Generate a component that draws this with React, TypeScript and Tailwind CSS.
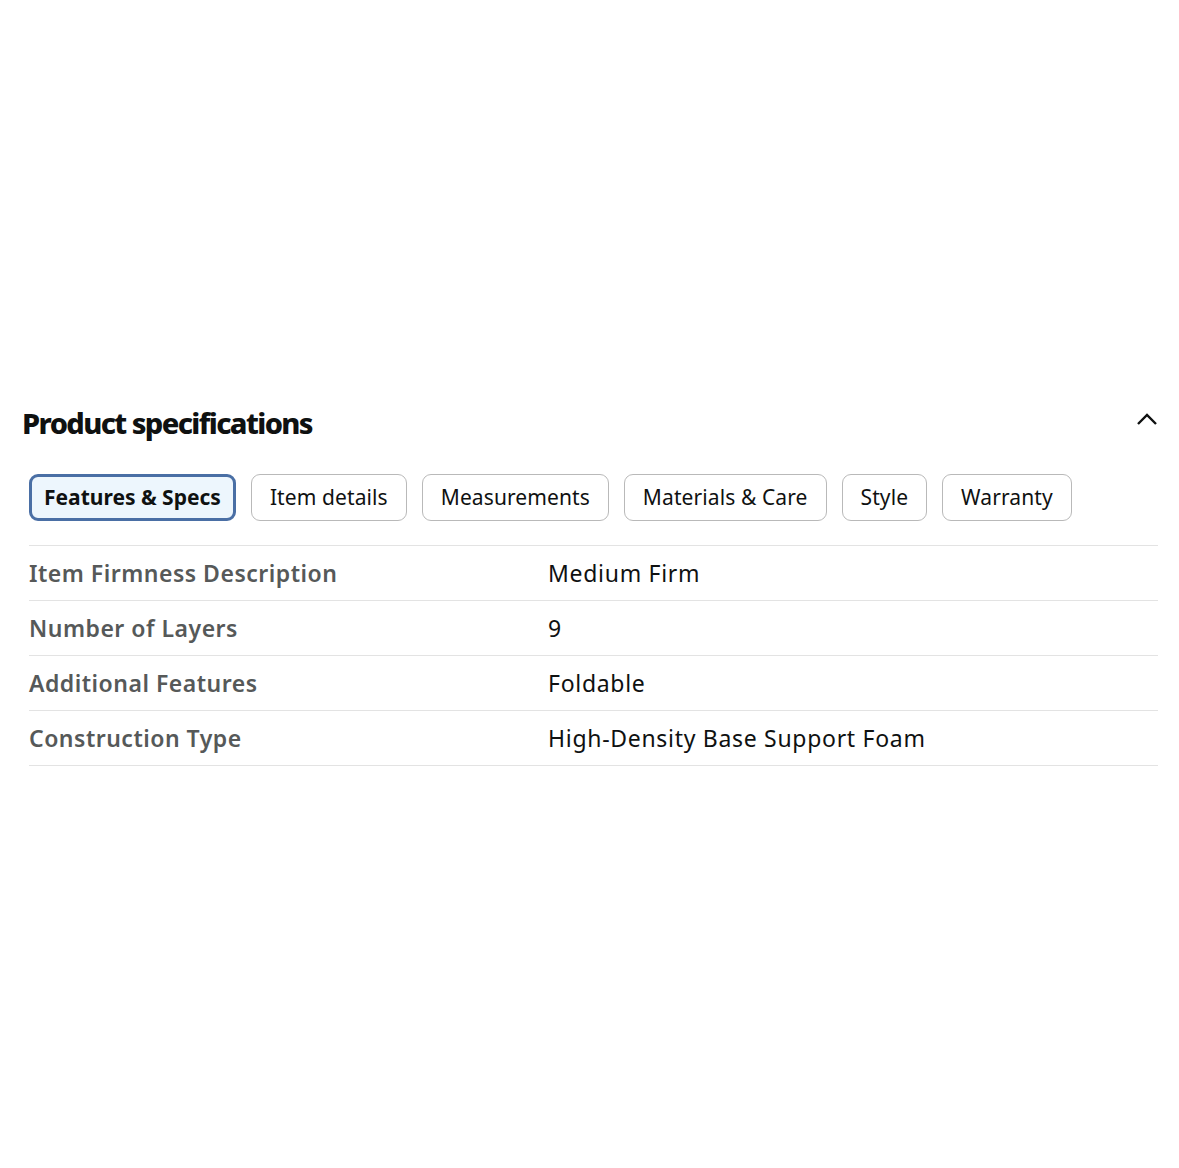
import React from "react";

const tabs = ["Features & Specs", "Item details", "Measurements", "Materials & Care", "Style", "Warranty"];

const specs = [
  { label: "Item Firmness Description", value: "Medium Firm" },
  { label: "Number of Layers", value: "9" },
  { label: "Additional Features", value: "Foldable" },
  { label: "Construction Type", value: "High-Density Base Support Foam" },
];

export default function App() {
  return (
    <div className="min-h-[1168px] w-full bg-white font-['Noto_Sans',sans-serif] text-[#0f1111]">
      <div className="pt-[403px] pl-[22px] pr-[21px]">
        {/* Header */}
        <div className="flex items-center justify-between">
          <h2 className="text-[29px] font-extrabold tracking-[-1.6px] leading-[40px] text-[#0f1111]">
            Product specifications
          </h2>
          <svg width="22" height="14" viewBox="0 0 22 14" className="-mt-[8px]">
            <path d="M2 12 L11 3 L20 12" fill="none" stroke="#0f1111" strokeWidth="2.4" />
          </svg>
        </div>

        <div className="pl-[7px]">
          {/* Tabs */}
          <div className="mt-[31px] flex gap-[15px]">
            {tabs.map((tab, i) => (
              <button
                key={tab}
                className={
                  i === 0
                    ? "h-[47px] rounded-[9px] border-[3px] border-[#4a6fa5] bg-[#edf6fd] px-[12px] text-[21px] font-bold text-[#0f1111]"
                    : "h-[47px] rounded-[9px] border border-[#b9b9b9] bg-white px-[18px] text-[21px] tracking-[0.1px] text-[#0f1111]"
                }
              >
                {tab}
              </button>
            ))}
          </div>

          {/* Table */}
          <div className="mt-[24px] border-t border-[#e3e3e3]">
            {specs.map((s) => (
              <div key={s.label} className="flex h-[55px] items-center border-b border-[#e3e3e3]">
                <div className="w-[519px] text-[23px] font-semibold tracking-[0.5px] text-[#565959]">{s.label}</div>
                <div className="text-[23px] tracking-[0.7px] text-[#0f1111]">{s.value}</div>
              </div>
            ))}
          </div>
        </div>
      </div>
    </div>
  );
}
